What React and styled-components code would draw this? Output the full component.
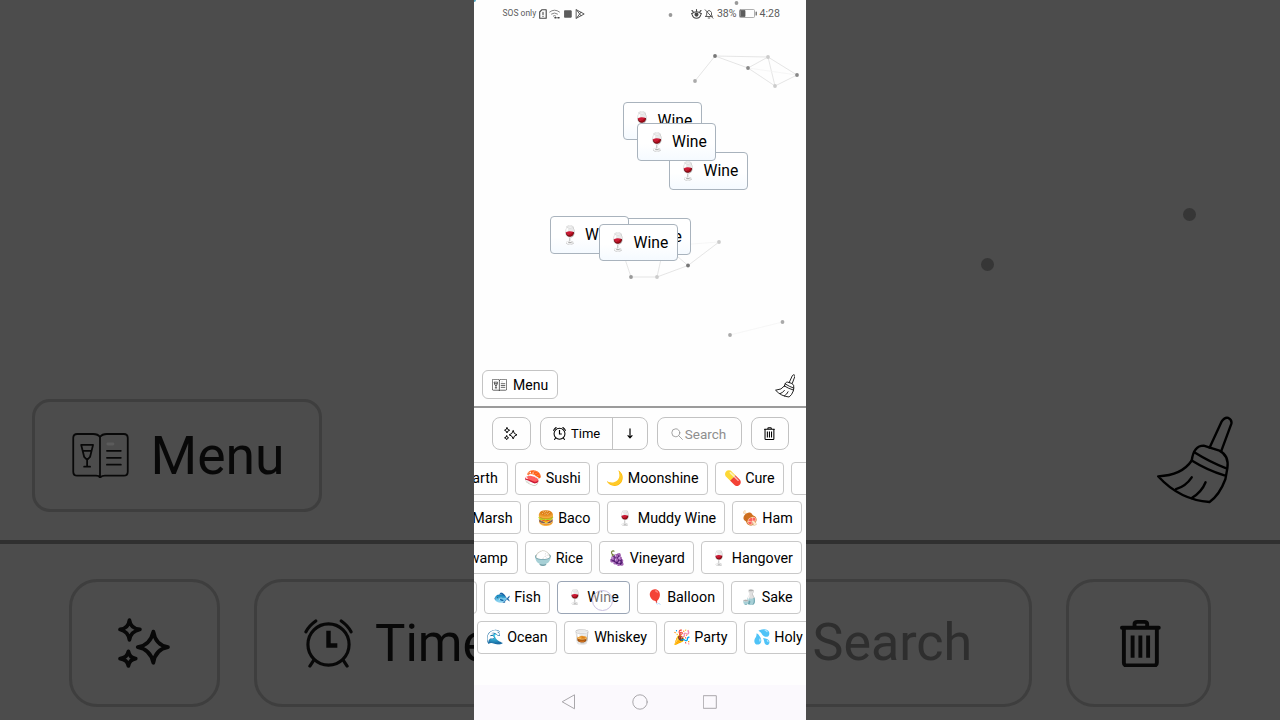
import React from "react";
import styled, { createGlobalStyle } from "styled-components";

const GlobalStyle = createGlobalStyle`
  * {
    box-sizing: border-box;
  }
  body {
    margin: 0;
    overflow: hidden;
    background: #4c4c4c;
    font-family: Roboto, "Noto Color Emoji", sans-serif;
    color: #000;
  }
`;

const Page = styled.main`
  display: grid;
  grid-template-columns: 474px 332px 474px;
  width: 1280px;
  height: 720px;
  overflow: hidden;
`;

/* enlarged, darkened copy on both sides */
const Side = styled.section`
  position: relative;
  display: flex;
  flex-direction: column;
  overflow: hidden;
  background: #4c4c4c;
`;

const SideTop = styled.div`
  flex: none;
  display: flex;
  align-items: flex-start;
  justify-content: ${(p) => (p.$right ? "flex-end" : "flex-start")};
  height: 544px;
  padding: ${(p) => (p.$right ? "415px 47px 0 0" : "399px 0 0 32px")};
  border-bottom: 4px solid #303030;
`;

const SideBar = styled.div`
  display: flex;
  flex: none;
  gap: 34px;
  padding-top: 35px;
  padding-left: ${(p) => p.$left || 0}px;
`;

const SideBox = styled.div`
  flex: none;
  display: flex;
  align-items: center;
  width: ${(p) => p.$w}px;
  height: ${(p) => p.$h || 128}px;
  padding-left: ${(p) => p.$pad}px;
  gap: ${(p) => p.$gap || 0}px;
  border: 3px solid #3e3e3e;
  border-left-width: ${(p) => (p.$open ? 0 : 3)}px;
  border-radius: ${(p) => (p.$open ? "0 28px 28px 0" : p.$r ? p.$r + "px" : "28px")};
  font-size: ${(p) => p.$size || 51}px;
  line-height: 1;
  white-space: nowrap;
  color: ${(p) => (p.$muted ? "#2e2e2e" : "#080808")};
`;

const SideDot = styled.i`
  position: absolute;
  left: ${(p) => p.$x - 6.5}px;
  top: ${(p) => p.$y - 6.5}px;
  width: 13px;
  height: 13px;
  border-radius: 50%;
  background: #363636;
`;

const Phone = styled.section`
  display: flex;
  flex-direction: column;
  overflow: hidden;
  background: #fefefe;
`;

const Board = styled.div`
  position: relative;
  flex: none;
  display: flex;
  flex-direction: column;
  justify-content: space-between;
  height: 408px;
  border-bottom: 2px solid #9b9b9b;
`;

const Particles = styled.svg`
  position: absolute;
  inset: 0;
`;

const StatusBar = styled.div`
  position: relative;
  display: flex;
  align-items: center;
  justify-content: space-between;
  height: 27px;
  padding: 0 26px 0 28.5px;
  color: #5c5c5c;
`;

const StatusGroup = styled.div`
  display: flex;
  align-items: center;
  gap: ${(p) => p.$gap}px;
  font-size: ${(p) => p.$size}px;
  line-height: 27px;
`;

const BoardFoot = styled.div`
  position: relative;
  display: flex;
  align-items: flex-start;
  justify-content: space-between;
  height: 36px;
  padding: 0 11px 0 8px;
`;

const BroomButton = styled.div`
  display: flex;
  padding-top: 4px;
`;

const MenuButton = styled.button`
  display: flex;
  align-items: center;
  gap: 6px;
  width: 76px;
  height: 29px;
  padding: 0 0 0 9px;
  border: 1px solid #c4c4c4;
  border-radius: 6px;
  background: #fff;
  color: #000;
  font: 14px Roboto, sans-serif;
`;

const FloatingItem = styled.div`
  position: absolute;
  left: ${(p) => p.$x}px;
  top: ${(p) => p.$y}px;
  display: flex;
  align-items: center;
  gap: 5px;
  width: 79px;
  height: 37.5px;
  padding-left: 9px;
  border: 1px solid #a9b3bd;
  border-radius: 4px;
  background: linear-gradient(#fff 55%, #f5faff);
  font-size: 15.7px;
  white-space: nowrap;
`;

const Toolbar = styled.div`
  flex: none;
  display: flex;
  height: 53.5px;
  padding: 9px 0 0 18px;
  gap: 9px;
`;

const ToolButton = styled.div`
  display: flex;
  align-items: center;
  justify-content: center;
  gap: ${(p) => p.$gap || 0}px;
  width: ${(p) => p.$w}px;
  height: 33px;
  padding-right: ${(p) => p.$shift || 0}px;
  border: 1px solid #c2c2c2;
  border-radius: 8px;
  color: ${(p) => (p.$muted ? "#8e8e8e" : "#000")};
  font-size: ${(p) => p.$size || 13}px;
`;

const SortLabel = styled.div`
  display: flex;
  align-items: center;
  gap: 5px;
  width: 72px;
  height: 100%;
  padding-left: 12px;
  border-right: 1px solid #c2c2c2;
`;

const SortArrow = styled.div`
  display: flex;
  flex: 1;
  justify-content: center;
`;

const Items = styled.div`
  flex: none;
  display: flex;
  flex-direction: column;
  gap: 6.75px;
  height: 223.5px;
`;

const ItemRow = styled.div`
  display: flex;
  flex: none;
  gap: 7px;
  margin-left: ${(p) => p.$shift}px;
`;

const Item = styled.div`
  position: relative;
  flex: none;
  display: flex;
  align-items: center;
  gap: 3.5px;
  width: ${(p) => p.$w}px;
  height: 33px;
  padding-left: 8.5px;
  border: 1px solid ${(p) => (p.$active ? "#9aa5b5" : "#c8c8c8")};
  border-radius: 4px;
  background: #fff;
  font-size: 14.3px;
  white-space: nowrap;
`;

const Emoji = styled.span`
  flex: none;
  display: flex;
  justify-content: center;
  width: ${(p) => (p.$big ? 20 : 17.7)}px;
  font-size: ${(p) => (p.$big ? "17.5px" : "inherit")};
`;

const Touch = styled.i`
  position: absolute;
  left: 34px;
  top: 8px;
  width: 21px;
  height: 21px;
  border: 1px solid #c9bfe0;
  border-radius: 50%;
  background: rgba(255, 255, 255, 0.45);
`;

const NavBar = styled.nav`
  flex: 1;
  display: flex;
  align-items: center;
  justify-content: center;
  gap: 55.5px;
  padding: 0 2px 2px 0;
  background: #fbf9fd;
`;

const Stroke = styled.svg`
  flex: none;
  fill: none;
  stroke: currentColor;
  stroke-linecap: round;
  stroke-linejoin: round;
`;

const SparkleIcon = ({ size }) => (
  <Stroke width={size} height={size} viewBox="0 0 50 50" strokeWidth="3.6">
    <path d="M34 14 Q36 27 48 29 Q36 31 34 44 Q31 31 19 29 Q31 27 34 14Z" />
    <path d="M11 3 Q12 11 21 12 Q12 14 11 22 Q10 14 2 12 Q10 11 11 3Z" />
    <path d="M10 33 Q11 39 17 40 Q11 41 10 47 Q9 41 2 40 Q9 39 10 33Z" />
  </Stroke>
);

const ClockIcon = ({ size, weight = 3.2 }) => (
  <Stroke width={size} height={size} viewBox="0 0 50 50" strokeWidth={weight}>
    <circle cx="25" cy="26" r="21" />
    <path d="M25 12V27H34" strokeWidth="4.5" strokeLinecap="butt" strokeLinejoin="miter" />
    <path d="M2 13Q5 7 12 2M38 2Q45 7 48 13M10 42L6 48M40 42L44 48" />
  </Stroke>
);

const TrashIcon = ({ size }) => (
  <Stroke width={size * 0.84} height={size} viewBox="0 0 42 50" strokeWidth="4">
    <path d="M2 9H40M15 8V5Q15 3 18 3H25Q28 3 28 5V8M4 9V45Q4 48 7 48H35Q38 48 38 45V9" />
    <path d="M13 17V40M21 17V40M29 17V40" strokeLinecap="butt" />
  </Stroke>
);

const BookIcon = ({ size, weight = 1.8 }) => (
  <Stroke width={size} height={size * 0.8} viewBox="0 0 57 46" strokeWidth={weight}>
    <path d="M28 4Q26 1 21 1H5Q1 1 1 5V39Q1 43 5 43H24Q27 43 28 45Q30 43 33 43H52Q56 43 56 39V5Q56 1 52 1H35Q30 1 28 4V44" />
    <path d="M9 12H21L18 24L15 27L12 24ZM11 18H19M15 26V34M12 34H18M35 18H49M35 25H49M35 32H49" />
    <path d="M36 11H41" strokeWidth="3" stroke="#777" strokeOpacity=".35" />
  </Stroke>
);

const BroomIcon = ({ size, weight = 2.4 }) => (
  <Stroke width={size * 0.87} height={size} viewBox="0 0 78 90" strokeWidth={weight}>
    <path d="M54 33L66 7Q69 2 73 3Q77 5 76 9L66 36" />
    <path d="M36 46Q38 31 48 31L64 36Q74 41 72 54L70 65Q64 81 54 88Q24 86 2 62Q26 61 36 46Z" />
    <path d="M39 38Q55 48 71 54M36 46Q52 56 69 61M36 63Q30 72 20 75M50 68Q46 78 36 84" />
  </Stroke>
);

const links = [
  [221, 81, 241, 56], [241, 56, 274, 68], [241, 56, 294, 57], [274, 68, 294, 57],
  [274, 68, 301, 86], [294, 57, 301, 86], [294, 57, 323, 75], [301, 86, 323, 75],
  [157, 277, 183, 277], [157, 277, 148, 250], [183, 277, 189, 250],
  [183, 277, 214, 265.5], [214, 265.5, 196, 250], [214, 265.5, 245, 242],
];

const faintLinks = [
  [274, 68, 323, 75], [245, 242, 204, 245], [256, 335, 308.5, 322],
];

const dots = [
  [196.5, 15, "#999"], [262.5, 3, "#999"], [221, 81, "#aaa"], [241, 56, "#777"],
  [274, 68, "#888"], [294, 57, "#ccc"], [301, 86, "#ccc"], [323, 75, "#888"],
  [157, 277, "#999"], [183, 277, "#ccc"], [214, 265.5, "#777"], [245, 242, "#ccc"],
  [256, 335, "#aaa"], [308.5, 322, "#aaa"],
];

const wines = [
  [148.5, 102], [194.5, 152], [163, 123], [138, 217.5], [76, 216], [124.5, 223.5],
];

const rows = [
  { shift: -40.5, items: [["🌍", "Earth", 74.5], ["🍣", "Sushi", 75], ["🌙", "Moonshine", 110.5], ["💊", "Cure", 69.5], ["", "", 60]] },
  { shift: -32.5, items: [["🌿", "Marsh", 79], ["🍔", "Baco", 72.5], ["🍷", "Muddy Wine", 117.5], ["🍖", "Ham", 70.5]] },
  { shift: -44.5, items: [["🐊", "Swamp", 88.5], ["🍚", "Rice", 67], ["🍇", "Vineyard", 95], ["🍷", "Hangover", 101]] },
  { shift: -57.5, items: [["", "", 60], ["🐟", "Fish", 66], ["🍷", "Wine", 73], ["🎈", "Balloon", 87.5], ["🍶", "Sake", 70]] },
  { shift: 2.5, items: [["🌊", "Ocean", 80], ["🥃", "Whiskey", 93], ["🎉", "Party", 73], ["💦", "Holy", 110]] },
];

export default function App() {
  return (
    <>
      <GlobalStyle />
      <Page>
        <Side>
          <SideTop>
            <SideBox $w={290} $h={113} $pad={36.5} $gap={22} $size={53.5} $r={18}>
              <BookIcon size={57} />
              Menu
            </SideBox>
          </SideTop>
          <SideBar $left={69}>
            <SideBox $w={151} $pad={46}>
              <SparkleIcon size={52} />
            </SideBox>
            <SideBox $w={400} $pad={47} $gap={22}>
              <ClockIcon size={49} />
              Time
            </SideBox>
          </SideBar>
        </Side>

        <Phone>
          <Board>
            <Particles width="332" height="406">
              {links.map(([x1, y1, x2, y2], i) => (
                <line key={i} x1={x1} y1={y1} x2={x2} y2={y2} stroke="#dedede" strokeWidth="0.8" />
              ))}
              {faintLinks.map(([x1, y1, x2, y2], i) => (
                <line key={i} x1={x1} y1={y1} x2={x2} y2={y2} stroke="#f4f4f4" strokeWidth="0.8" />
              ))}
              {dots.map(([x, y, fill], i) => (
                <circle key={i} cx={x} cy={y} r="1.9" fill={fill} />
              ))}
              <circle cx="0" cy="0" r="2" fill="#4aa3c0" />
            </Particles>
            <StatusBar>
              <StatusGroup $gap={2.5} $size={8.5}>
                SOS only
                <Stroke width="8" height="10" viewBox="0 0 8 10" strokeWidth="1.1" color="#444">
                  <path d="M.7 3L3 .7H7.2V9.3H.7ZM4 3.2V5.6M4 7.3V7.5" />
                </Stroke>
                <Stroke width="12" height="10" viewBox="0 0 12 10" strokeWidth=".9" color="#777">
                  <path d="M.7 3Q5.5-.8 10.5 3M2.5 5Q5.5 2.8 8.5 5M4.3 7Q5.5 6 6.7 7" />
                  <path d="M6 8.8H7M9 8.8H10" strokeWidth="1.6" stroke="#444" />
                </Stroke>
                <Stroke width="8" height="8" viewBox="0 0 8 8">
                  <rect x=".8" y=".8" width="6.4" height="6.4" fill="#5c5c5c" />
                </Stroke>
                <Stroke width="12" height="10" viewBox="-1 0 12 10" strokeWidth="1">
                  <path d="M1.5 .8L9.2 5L1.5 9.2ZM1.5 .8L6 6.8M1.5 9.2L6 3.2" />
                </Stroke>
              </StatusGroup>
              <StatusGroup $gap={2.5} $size={10.6}>
                <Stroke width="11" height="10" viewBox="0 0 11 10" strokeWidth="1.1" color="#444">
                  <path d="M.6 4.8Q5.5 .8 10.4 4.8M1.3 5.8Q2 9 5.5 9.2Q9 9 9.7 5.8M2 2.5L1 1.5M9 2.5L10 1.5M5.5 1.8V.6" />
                  <circle cx="5.5" cy="5.6" r="1.5" fill="currentColor" />
                </Stroke>
                <Stroke width="10" height="10" viewBox="0 0 9 10" strokeWidth="1">
                  <path d="M1 7.5H8L7 6V3.5Q4.5-.5 2.2 3.5V6ZM3.7 9H5.3M.7 .8L8.4 9.2" />
                </Stroke>
                38%
                <Stroke width="18" height="9" viewBox="0 0 18 9" strokeWidth=".8">
                  <rect x=".5" y=".5" width="15" height="8" rx="1" stroke="#999" />
                  <rect x="1.5" y="1.5" width="4.5" height="6" fill="currentColor" />
                  <path d="M17.2 3V6" strokeWidth="1.2" />
                </Stroke>
                <span>4:28</span>
              </StatusGroup>
            </StatusBar>
            {wines.map(([x, y], i) => (
              <FloatingItem key={i} $x={x} $y={y}>
                <Emoji $big>🍷</Emoji>
                Wine
              </FloatingItem>
            ))}
            <BoardFoot>
              <MenuButton>
                <BookIcon size={15} weight={2.3} />
                Menu
              </MenuButton>
              <BroomButton>
                <BroomIcon size={23.5} weight={3.3} />
              </BroomButton>
            </BoardFoot>
          </Board>

          <Toolbar>
            <ToolButton $w={39} $shift={1}>
              <SparkleIcon size={13.5} />
            </ToolButton>
            <ToolButton $w={108}>
              <SortLabel>
                <ClockIcon size={13} weight={4} />
                Time
              </SortLabel>
              <SortArrow>
                <Stroke width="8" height="11" viewBox="0 0 8 12" strokeWidth="1.3">
                  <path d="M4 1V10.5M1.8 8.4L4 10.8L6.2 8.4" />
                </Stroke>
              </SortArrow>
            </ToolButton>
            <ToolButton $w={85} $muted $gap={2} $size={13.5} $shift={2}>
              <Stroke width="12" height="12" viewBox="0 0 12 12" strokeWidth=".8">
                <circle cx="4.8" cy="4.8" r="4" />
                <path d="M7.8 7.8L11.4 11.4" />
              </Stroke>
              Search
            </ToolButton>
            <ToolButton $w={38} $shift={1}>
              <TrashIcon size={13} />
            </ToolButton>
          </Toolbar>

          <Items>
            {rows.map((row, i) => (
              <ItemRow key={i} $shift={row.shift}>
                {row.items.map(([emoji, name, w], j) => (
                  <Item key={j} $w={w} $active={name === "Wine"}>
                    <Emoji>{emoji}</Emoji>
                    {name}
                    {name === "Wine" && <Touch />}
                  </Item>
                ))}
              </ItemRow>
            ))}
          </Items>

          <NavBar>
            <Stroke width="15" height="16" viewBox="0 0 15 16" strokeWidth="1" color="#a9a7ab">
              <path d="M13.5 1.2V14.8L1.5 8Z" />
            </Stroke>
            <Stroke width="16" height="16" viewBox="0 0 16 16" strokeWidth="1" color="#a9a7ab">
              <circle cx="8" cy="8" r="7.2" />
            </Stroke>
            <Stroke width="14" height="14" viewBox="0 0 14 14" strokeWidth="1" color="#a9a7ab">
              <rect x=".7" y=".7" width="12.6" height="12.6" />
            </Stroke>
          </NavBar>
        </Phone>

        <Side>
          <SideDot $x={181.5} $y={264} />
          <SideDot $x={383.5} $y={214} />
          <SideTop $right>
            <BroomIcon size={89} />
          </SideTop>
          <SideBar>
            <SideBox $w={226} $pad={6.5} $open $muted $size={52}>
              Search
            </SideBox>
            <SideBox $w={145} $pad={51}>
              <TrashIcon size={48.5} />
            </SideBox>
          </SideBar>
        </Side>
      </Page>
    </>
  );
}
